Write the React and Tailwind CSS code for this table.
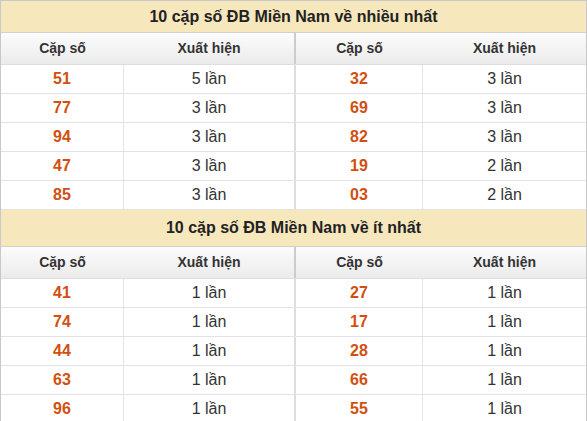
const most = [
  ["51", "5 lần", "32", "3 lần"],
  ["77", "3 lần", "69", "3 lần"],
  ["94", "3 lần", "82", "3 lần"],
  ["47", "3 lần", "19", "2 lần"],
  ["85", "3 lần", "03", "2 lần"],
];

const least = [
  ["41", "1 lần", "27", "1 lần"],
  ["74", "1 lần", "17", "1 lần"],
  ["44", "1 lần", "28", "1 lần"],
  ["63", "1 lần", "66", "1 lần"],
  ["96", "1 lần", "55", "1 lần"],
];

const Section = ({ title, rows, titleH }) => {
  return (
    <div>
      <div
        className={`${titleH} flex items-center justify-center bg-[#f6e7bd] border-b border-[#cfcfcf] text-[16px] font-bold text-[#222]`}
      >
        {title}
      </div>
      <div className="flex h-[32px] border-b border-[#dedede] bg-gradient-to-b from-[#fcfcfc] to-[#ebebeb] text-[14px] font-bold text-[#333]">
        <div className="w-[123px] flex items-center justify-center">Cặp số</div>
        <div className="w-[172px] flex items-center justify-center border-r-2 border-[#cccccc]">
          Xuất hiện
        </div>
        <div className="w-[127px] flex items-center justify-center">Cặp số</div>
        <div className="flex-1 flex items-center justify-center">Xuất hiện</div>
      </div>
      {rows.map((r, i) => (
        <div key={i} className="flex h-[29px] border-b border-[#e3e3e3] bg-white">
          <div className="w-[123px] border-r border-[#e3e3e3] flex items-center justify-center text-[16px] font-bold text-[#d2500f]">
            {r[0]}
          </div>
          <div className="w-[172px] border-r-2 border-[#dddddd] flex items-center justify-center text-[16px] text-[#333]">
            {r[1]}
          </div>
          <div className="w-[127px] border-r border-[#e3e3e3] flex items-center justify-center text-[16px] font-bold text-[#d2500f]">
            {r[2]}
          </div>
          <div className="flex-1 flex items-center justify-center text-[16px] text-[#333]">
            {r[3]}
          </div>
        </div>
      ))}
    </div>
  );
};

export default function App() {
  return (
    <div className="w-[587px] bg-white font-['Liberation_Sans',Arial,sans-serif]">
      <div className="border border-[#c8c8c8]">
        <Section title="10 cặp số ĐB Miền Nam về nhiều nhất" rows={most} titleH="h-[32px]" />
        <Section title="10 cặp số ĐB Miền Nam về ít nhất" rows={least} titleH="h-[37px]" />
      </div>
    </div>
  );
}
